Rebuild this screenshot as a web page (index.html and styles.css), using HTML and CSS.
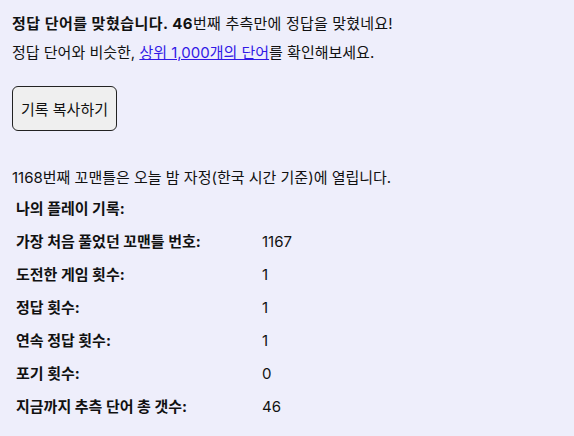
FILE: index.html
```html
<!DOCTYPE html>
<html lang="ko">
<head>
    <meta charset="UTF-8">
    <meta name="viewport" content="width=device-width, initial-scale=1.0">
    <title>꼬맨틀 결과</title>
    <link rel="stylesheet" href="styles.css">
</head>
<body>
    <div class="result">
        <p class="line first"><b>정답 단어를 맞혔습니다. 46</b>번째 추측만에 정답을 맞혔네요!</p>
        <p class="line">정답 단어와 비슷한, <a href="#" class="top-link">상위 1,000개의 단어</a>를 확인해보세요.</p>
        <button class="copy-btn">기록 복사하기</button>
        <p class="next">1168번째 꼬맨틀은 오늘 밤 자정(한국 시간 기준)에 열립니다.</p>
        <table class="stats">
            <tr><th colspan="2">나의 플레이 기록:</th></tr>
            <tr><th>가장 처음 풀었던 꼬맨틀 번호:</th><td>1167</td></tr>
            <tr><th>도전한 게임 횟수:</th><td>1</td></tr>
            <tr><th>정답 횟수:</th><td>1</td></tr>
            <tr><th>연속 정답 횟수:</th><td>1</td></tr>
            <tr><th>포기 횟수:</th><td>0</td></tr>
            <tr><th>지금까지 추측 단어 총 갯수:</th><td>46</td></tr>
        </table>
    </div>
</body>
</html>
```

FILE: styles.css
```css
body {
    margin: 0;
    padding: 9px 12px;
    background-color: #eeeefb;
    color: #111111;
    font-family: Inter, "Noto Sans CJK KR", sans-serif;
    font-size: 15px;
}

.line {
    margin: 0;
    line-height: 29px;
}

.first {
    letter-spacing: 0.2px;
}

.first b {
    letter-spacing: 0.5px;
}

.top-link {
    color: #3219e6;
}

.copy-btn {
    margin-top: 19px;
    width: 105px;
    height: 45px;
    padding: 0;
    font-family: inherit;
    font-size: 15px;
    color: #111111;
    background-color: #efefef;
    border: 1px solid #222222;
    border-radius: 6px;
}

.next {
    margin: 37px 0 0;
    line-height: 20px;
}

.stats {
    margin-top: 3px;
    border-spacing: 2px;
}

.stats th {
    text-align: left;
    font-weight: bold;
    width: 240px;
    padding: 6px 2px;
    line-height: 19px;
}

.stats td {
    padding: 6px 2px;
    line-height: 19px;
}
```
